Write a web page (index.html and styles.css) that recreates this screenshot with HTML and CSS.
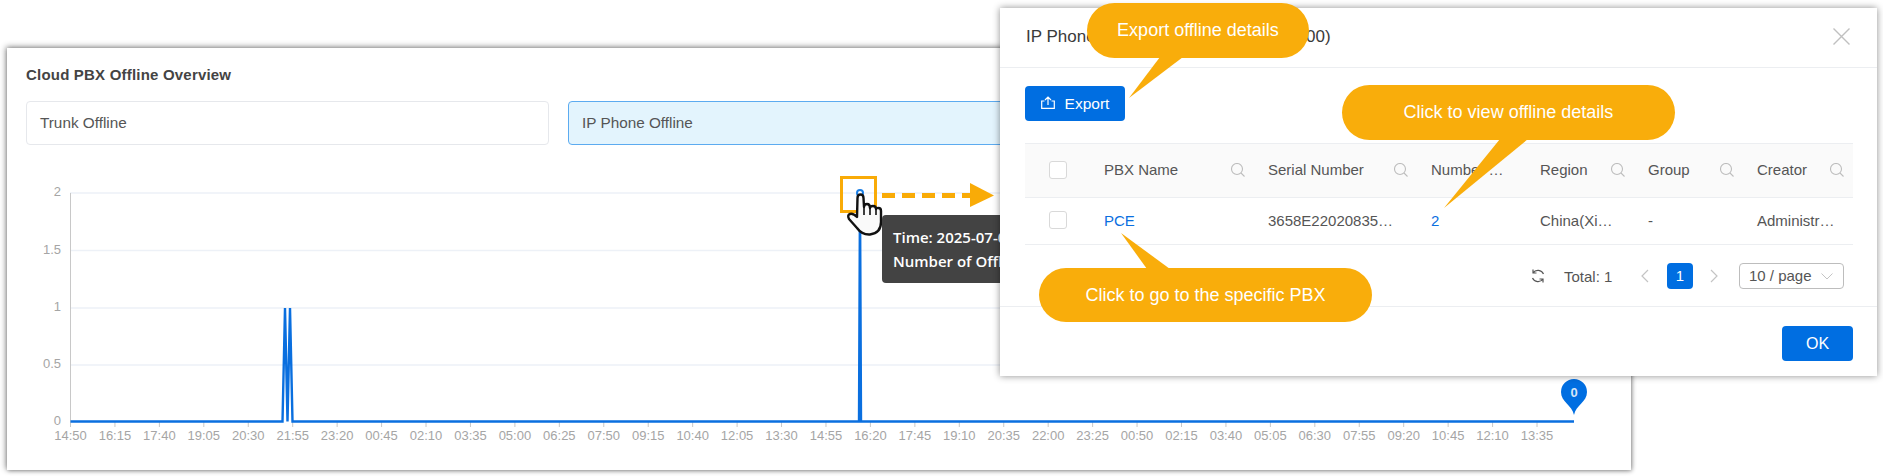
FILE: index.html
```html
<!DOCTYPE html>
<html lang="en">
<head>
  <meta charset="UTF-8">
  <title>Cloud PBX Offline Overview</title>
  <link rel="stylesheet" href="styles.css">
</head>
<body>
  <div class="card">
    <h2 class="card-title">Cloud PBX Offline Overview</h2>
    <div class="tabs">
      <div class="tab">Trunk Offline</div>
      <div class="tab active">IP Phone Offline</div>
    </div>
    <div class="chart">
      <svg class="chart-svg" viewBox="7 150 1624 320" width="1624" height="320">
        <g class="grid">
          <path d="M70 193H1574"/>
          <path d="M70 250.5H1574"/>
          <path d="M70 308H1574"/>
          <path d="M70 365H1574"/>
        </g>
        <path class="axis" d="M70.5 193V422"/>
        <path id="ticks" class="axis" d=""/>
        <g class="y-labels">
          <text x="61" y="196">2</text>
          <text x="61" y="254">1.5</text>
          <text x="61" y="311">1</text>
          <text x="61" y="368">0.5</text>
          <text x="61" y="425">0</text>
        </g>
        <g id="xLabels" class="x-labels"></g>
        <path class="line" d="M70.5 421.5H282.5L285 308L287.5 421.5L290 308L292.5 421.5H859L860 193L861 421.5H1574"/>
        <circle class="dot" cx="860" cy="193" r="3"/>
        <path class="pin" d="M1574 415C1572 405 1561 402 1561 392A13 13 0 0 1 1587 392C1587 402 1576 405 1574 415Z"/>
        <text class="pin-label" x="1574" y="397">0</text>
        <rect class="focus" x="841.5" y="177.5" width="34" height="34"/>
        <path class="dash" d="M882 195.500H971"/>
        <path class="arrow" d="M970 183L994 195.500L970 207Z"/>
        <path class="hand" d="M857.500 198Q857.500 194.500 860.500 194.500Q863.500 194.500 863.500 198L864 207Q864 204 867 204Q870 204 870 208Q870 206 873 206Q876 206 876 209Q876 208 878.500 208Q881 208 881 211L881 222Q881 233 870 234.500Q862 235 857 228L849 219Q847 215 850 214Q853 213 857 217Z"/>
        <path class="hand-line" d="M864 207V215M870 208V215M876 209V215"/>
      </svg>
      <div class="chart-tip">
        <div>Time: 2025-07-08 16:00</div>
        <div>Number of Offline: 2</div>
      </div>
    </div>
  </div>

  <div class="modal">
    <div class="modal-head">
      <span class="modal-title">IP Phone Offline List (2025-07-08 16:00)</span>
      <svg class="close" viewBox="0 0 17 17" width="17" height="17"><path d="M.5 .5L16.500 16.500M16.500 .5L.5 16.500"/></svg>
    </div>
    <div class="modal-body">
      <button class="btn btn-export" type="button">
        <svg class="export-icon" viewBox="0 0 14 13" width="14" height="13"><path d="M3.500 5H.7V12.300H13.300V5H10.500M7 9V1M4 4L7 1L10 4"/></svg>
        Export
      </button>
      <table class="table">
        <colgroup>
          <col class="col-check"><col class="col-name"><col class="col-serial"><col class="col-num"><col class="col-region"><col class="col-group"><col class="col-creator">
        </colgroup>
        <thead>
          <tr>
            <th><span class="check"></span></th>
            <th><div class="th-in">PBX Name <svg class="search" viewBox="0 0 14 14"><circle cx="6" cy="6" r="5.500"/><path d="M10 10L13.500 13.500"/></svg></div></th>
            <th><div class="th-in">Serial Number <svg class="search" viewBox="0 0 14 14"><circle cx="6" cy="6" r="5.500"/><path d="M10 10L13.500 13.500"/></svg></div></th>
            <th><div class="th-in">Number …</div></th>
            <th><div class="th-in">Region <svg class="search" viewBox="0 0 14 14"><circle cx="6" cy="6" r="5.500"/><path d="M10 10L13.500 13.500"/></svg></div></th>
            <th><div class="th-in">Group <svg class="search" viewBox="0 0 14 14"><circle cx="6" cy="6" r="5.500"/><path d="M10 10L13.500 13.500"/></svg></div></th>
            <th><div class="th-in">Creator <svg class="search" viewBox="0 0 14 14"><circle cx="6" cy="6" r="5.500"/><path d="M10 10L13.500 13.500"/></svg></div></th>
          </tr>
        </thead>
        <tbody>
          <tr>
            <td><span class="check"></span></td>
            <td><a class="link" href="#">PCE</a></td>
            <td>3658E22020835…</td>
            <td><a class="link" href="#">2</a></td>
            <td>China(Xi…</td>
            <td>-</td>
            <td>Administr…</td>
          </tr>
        </tbody>
      </table>
      <div class="pager">
        <svg class="refresh" viewBox="0 0 16 16" width="16" height="16"><path d="M13.500 6A6 6 0 0 0 3 5M2.500 10A6 6 0 0 0 13 11M3 1.500V5H6.500M13 14.500V11H9.500"/></svg>
        <span class="total">Total: 1</span>
        <svg class="page-arrow prev" viewBox="0 0 26 26" width="26" height="26"><path d="M16 7L10 13L16 19"/></svg>
        <span class="page-num">1</span>
        <svg class="page-arrow next" viewBox="0 0 26 26" width="26" height="26"><path d="M10 7L16 13L10 19"/></svg>
        <div class="page-size">
          10 / page
          <svg class="chevron" viewBox="0 0 12 7" width="12" height="7"><path d="M.5 .5L6 6L11.500 .5"/></svg>
        </div>
      </div>
    </div>
    <div class="modal-foot">
      <button class="btn btn-ok" type="button">OK</button>
    </div>
  </div>

  <svg class="tails" viewBox="0 0 1883 476" width="1883" height="476">
    <path d="M1160 57L1183 57L1129 98Z"/>
    <path d="M1500 139L1528 139L1444 208Z"/>
    <path d="M1147 269L1170 269L1121 233Z"/>
  </svg>
  <div class="bubble bubble-export">Export offline details</div>
  <div class="bubble bubble-view">Click to view offline details</div>
  <div class="bubble bubble-go">Click to go to the specific PBX</div>

  <script>
    // x axis: one label every 85 minutes, 44.44px apart
    const labels = ['14:50','16:15','17:40','19:05','20:30','21:55','23:20','00:45','02:10','03:35','05:00','06:25','07:50','09:15','10:40','12:05','13:30','14:55','16:20','17:45','19:10','20:35','22:00','23:25','00:50','02:15','03:40','05:05','06:30','07:55','09:20','10:45','12:10','13:35'];
    const group = document.getElementById('xLabels');
    let ticks = '';
    labels.forEach(function(label, i) {
      const x = 70.5 + i * 44.44;
      const text = document.createElementNS('http://www.w3.org/2000/svg', 'text');
      text.setAttribute('x', x);
      text.setAttribute('y', 440);
      text.textContent = label;
      group.appendChild(text);
      ticks += 'M' + x + ' 422V427';
    });
    document.getElementById('ticks').setAttribute('d', ticks);
  </script>
</body>
</html>
```

FILE: styles.css
```css
* {
  box-sizing: border-box;
}
html, body {
  height: 476px;
  overflow: hidden;
}
body {
  margin: 0;
  background: #fff;
  font-family: "Liberation Sans", Arial, sans-serif;
  color: #555;
  position: relative;
}
.card {
  margin: 48px 0 0 7px;
  width: 1624px;
  height: 422px;
  padding-top: 19px;
  background: #fff;
  box-shadow: -1px -1px 6px rgba(0, 0, 0, 0.45), 1px 1px 4px rgba(0, 0, 0, 0.3);
}
.card-title {
  margin: 0 0 18px 19px;
  font-size: 15px;
  line-height: 16px;
  font-weight: bold;
  letter-spacing: 0.2px;
  color: #444;
}
.tabs {
  display: flex;
  gap: 19px;
  padding-left: 19px;
  margin-bottom: 5px;
}
.tab {
  width: 523px;
  height: 44px;
  padding-left: 13px;
  line-height: 42px;
  font-size: 15.300px;
  border: 1px solid #e6e8ec;
  border-radius: 4px;
}
.tab.active {
  background: #e3f4fd;
  border-color: #5cabf0;
}
.chart {
  position: relative;
  height: 320px;
}
.chart-svg {
  display: block;
}
.grid path {
  stroke: #edf1f7;
  stroke-width: 1.500;
  fill: none;
}
.axis {
  stroke: #c8c8c8;
  stroke-width: 1;
  fill: none;
}
.y-labels text {
  font-size: 13px;
  fill: #a5a5a5;
  text-anchor: end;
}
.x-labels text {
  font-size: 13px;
  fill: #a5a5a5;
  text-anchor: middle;
}
.line {
  fill: none;
  stroke: #0a6fdf;
  stroke-width: 2.400;
}
.dot {
  fill: #fff;
  stroke: #1b7fe6;
  stroke-width: 2;
}
.pin {
  fill: #006ee1;
}
.pin-label {
  font-size: 13px;
  font-weight: bold;
  fill: #d6e6f8;
  text-anchor: middle;
}
.focus {
  fill: none;
  stroke: #f9ab07;
  stroke-width: 3;
}
.dash {
  fill: none;
  stroke: #f9ab07;
  stroke-width: 5;
  stroke-dasharray: 13 7;
}
.arrow {
  fill: #f9ab07;
}
.hand {
  fill: #fafafa;
  stroke: #111;
  stroke-width: 2.400;
  stroke-linejoin: round;
}
.hand-line {
  fill: none;
  stroke: #111;
  stroke-width: 1.600;
}
.chart-tip {
  position: absolute;
  left: 875px;
  top: 65px;
  width: 300px;
  height: 68px;
  padding: 10px 11px;
  background: #434343;
  border-radius: 4px;
  color: #fff;
  font-family: "Open Sans", sans-serif;
  font-size: 15px;
  line-height: 24px;
  white-space: nowrap;
  font-weight: 600;
}
.modal {
  position: absolute;
  left: 1000px;
  top: 8px;
  width: 877px;
  height: 368px;
  background: #fff;
  box-shadow: 0 0 7px rgba(0, 0, 0, 0.45);
}
.modal-head {
  height: 60px;
  padding: 0 27px 2px 26px;
  border-bottom: 1px solid #eceef1;
  display: flex;
  align-items: center;
  justify-content: space-between;
}
.modal-title {
  font-size: 17px;
  color: #3a3a3a;
}
.close path {
  stroke: #c0c0c0;
  stroke-width: 1.400;
  fill: none;
}
.modal-body {
  padding: 18px 24px 0 25px;
  height: 239px;
  border-bottom: 1px solid #eceef1;
}
.btn {
  display: inline-flex;
  align-items: center;
  justify-content: center;
  background: #006ee1;
  color: #fff;
  border: none;
  border-radius: 4px;
  font-family: inherit;
  font-size: 15px;
  height: 35px;
  padding: 0;
}
.btn-export {
  width: 100px;
  gap: 10px;
  display: flex;
  font-size: 15.500px;
}
.export-icon {
  margin-bottom: 3px;
}
.export-icon path {
  stroke: #fff;
  stroke-width: 1.200;
  fill: none;
}
.table {
  width: 828px;
  margin-top: 22px;
  table-layout: fixed;
  border-collapse: collapse;
  font-size: 15px;
}
.col-check { width: 63px; }
.col-name { width: 164px; }
.col-serial { width: 163px; }
.col-num { width: 109px; }
.col-region { width: 108px; }
.col-group { width: 109px; }
.col-creator { width: 112px; }
.table th {
  height: 54px;
  background: #fafafa;
  border-top: 1px solid #eceef1;
  border-bottom: 1px solid #eceef1;
  padding: 0 0 2px 16px;
  font-weight: normal;
  text-align: left;
}
.table th:first-child,
.table td:first-child {
  padding-left: 24px;
}
.table td {
  height: 47px;
  padding: 0 0 2px 16px;
  border-bottom: 1px solid #eceef1;
  white-space: nowrap;
}
.th-in {
  display: flex;
  align-items: center;
  justify-content: space-between;
  padding-right: 7px;
}
.table th:last-child .th-in {
  padding-right: 9px;
}
.search {
  width: 14px;
  height: 14px;
}
.search circle,
.search path {
  stroke: #bdbdbd;
  stroke-width: 1.100;
  fill: none;
}
.check {
  display: block;
  width: 18px;
  height: 18px;
  background: #fff;
  border: 1px solid #d9d9d9;
  border-radius: 3px;
}
.link {
  color: #0a6fdf;
  text-decoration: none;
}
.pager {
  display: flex;
  align-items: center;
  height: 26px;
  margin-top: 18px;
  padding-left: 505px;
  font-size: 15px;
}
.refresh path {
  stroke: #555;
  stroke-width: 1.200;
  fill: none;
}
.total {
  margin-left: 18px;
  width: 49px;
  white-space: nowrap;
}
.page-arrow path {
  stroke: #c4c4c4;
  stroke-width: 1.200;
  fill: none;
}
.prev {
  margin: 0 9px 0 19px;
}
.next {
  margin: 0 12px 0 8px;
}
.page-num {
  width: 26px;
  height: 26px;
  line-height: 26px;
  text-align: center;
  color: #fff;
  background: #006ee1;
  border-radius: 4px;
}
.page-size {
  width: 105px;
  height: 26px;
  padding: 0 10px 0 9px;
  line-height: 24px;
  border: 1px solid #bdbdbd;
  border-radius: 4px;
  display: flex;
  align-items: center;
  justify-content: space-between;
  white-space: nowrap;
}
.chevron path {
  stroke: #c4c4c4;
  stroke-width: 1;
  fill: none;
}
.modal-foot {
  display: flex;
  justify-content: flex-end;
  padding: 19px 24px 0 0;
}
.btn-ok {
  width: 71px;
  font-size: 16px;
}
.tails {
  position: absolute;
  left: 0;
  top: 0;
}
.tails path {
  fill: #f9ad0b;
}
.bubble {
  position: absolute;
  height: 55px;
  border-radius: 27.500px;
  background: #f9ad0b;
  color: #fff;
  font-size: 18px;
  text-align: center;
  white-space: nowrap;
}
.bubble-export {
  left: 1087px;
  top: 3px;
  width: 222px;
  line-height: 54px;
}
.bubble-view {
  left: 1342px;
  top: 85px;
  width: 333px;
  line-height: 55px;
}
.bubble-go {
  left: 1039px;
  top: 268px;
  width: 333px;
  height: 54px;
  line-height: 54px;
}
```
